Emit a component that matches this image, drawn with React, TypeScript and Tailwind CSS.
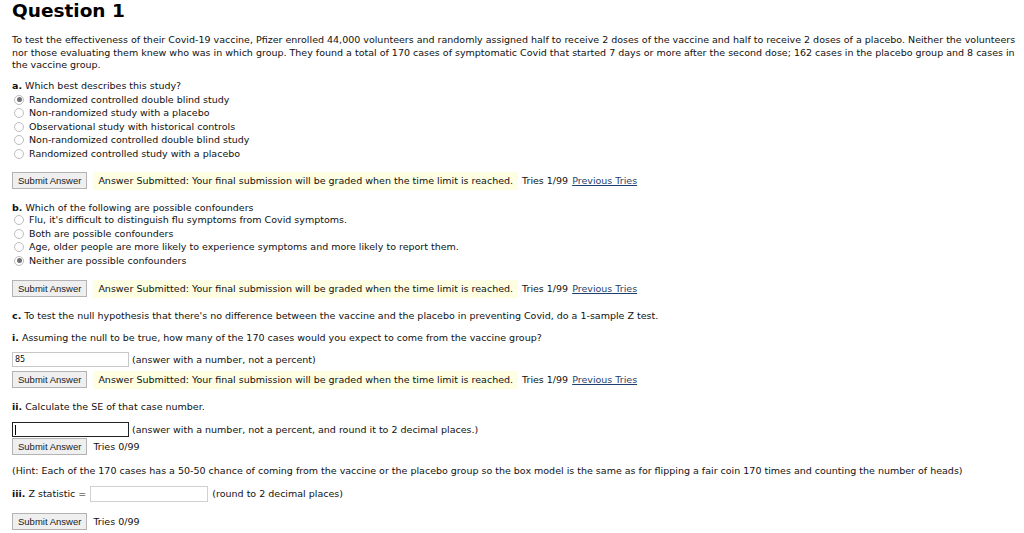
import React from "react";

const body = { fontFamily: '"DejaVu Sans", Verdana, sans-serif' };

function Radio({ checked }: { checked?: boolean }) {
  return (
    <span className="inline-flex items-center justify-center w-[10px] h-[10px] rounded-full border border-[#bdbdbd] bg-white mr-[5px] shrink-0">
      {checked && <span className="w-[5px] h-[5px] rounded-full bg-[#707070]" />}
    </span>
  );
}

function Options({ items, selected }: { items: string[]; selected: number }) {
  return (
    <div className="pl-[2px]">
      {items.map((t, i) => (
        <div key={t} className="flex items-center h-[13.5px]">
          <Radio checked={i === selected} />
          <span>{t}</span>
        </div>
      ))}
    </div>
  );
}

function SubmitButton() {
  return (
    <button
      className="h-[17px] px-[5px] border border-[#b3b3b3] bg-[#efefef] text-[9.5px] text-[#222] leading-none"
      style={{ fontFamily: '"Liberation Sans", Arial, sans-serif' }}
    >
      Submit Answer
    </button>
  );
}

function SubmittedRow({ className = "" }: { className?: string }) {
  return (
    <div className={`flex items-center h-[18px] ${className}`}>
      <SubmitButton />
      <span className="ml-[6px] bg-[#fefee3] px-[5px] leading-[18px]">
        Answer Submitted: Your final submission will be graded when the time limit is reached.
      </span>
      <span className="ml-[4px]">Tries 1/99</span>
      <span className="ml-[4px] underline text-[#1f3f6e]">Previous Tries</span>
    </div>
  );
}

function TriesRow({ className = "" }: { className?: string }) {
  return (
    <div className={`flex items-center h-[18px] ${className}`}>
      <SubmitButton />
      <span className="ml-[6px]">Tries 0/99</span>
    </div>
  );
}

export default function App() {
  return (
    <div className="bg-white text-[#111] w-[1024px] h-[533px] overflow-hidden px-[12px] text-[9.5px] leading-[12px]" style={body}>
      <h1 className="text-[18.5px] leading-[22px] font-bold text-black">Question 1</h1>

      <p className="mt-[12px] leading-[12.5px] whitespace-nowrap">
        To test the effectiveness of their Covid-19 vaccine, Pfizer enrolled 44,000 volunteers and randomly assigned half to receive 2 doses of the vaccine and half to receive 2 doses of a placebo. Neither the volunteers
        <br />
        nor those evaluating them knew who was in which group. They found a total of 170 cases of symptomatic Covid that started 7 days or more after the second dose; 162 cases in the placebo group and 8 cases in
        <br />
        the vaccine group.
      </p>

      <div className="mt-[8.5px]">
        <b>a.</b> Which best describes this study?
      </div>
      <div className="mt-[1px]">
        <Options
          selected={0}
          items={[
            "Randomized controlled double blind study",
            "Non-randomized study with a placebo",
            "Observational study with historical controls",
            "Non-randomized controlled double blind study",
            "Randomized controlled study with a placebo",
          ]}
        />
      </div>
      <SubmittedRow className="mt-[11px]" />

      <div className="mt-[12px]">
        <b>b.</b> Which of the following are possible confounders
      </div>
      <Options
        selected={3}
        items={[
          "Flu, it's difficult to distinguish flu symptoms from Covid symptoms.",
          "Both are possible confounders",
          "Age, older people are more likely to experience symptoms and more likely to report them.",
          "Neither are possible confounders",
        ]}
      />
      <SubmittedRow className="mt-[12px]" />

      <div className="mt-[12px]">
        <b>c.</b> To test the null hypothesis that there's no difference between the vaccine and the placebo in preventing Covid, do a 1-sample Z test.
      </div>
      <div className="mt-[10px]">
        <b>i.</b> Assuming the null to be true, how many of the 170 cases would you expect to come from the vaccine group?
      </div>
      <div className="mt-[8px] flex items-center h-[16px]">
        <div className="w-[117px] h-[15px] border border-[#c8c8c8] bg-white px-[2px] text-[8px] leading-[13px]">85</div>
        <span className="ml-[3px]">(answer with a number, not a percent)</span>
      </div>
      <SubmittedRow className="mt-[3px]" />

      <div className="mt-[12px]">
        <b>ii.</b> Calculate the SE of that case number.
      </div>
      <div className="mt-[9px] flex items-center h-[16px]">
        <div className="w-[117px] h-[15px] border border-[#222] bg-white flex items-center pl-[2px]">
          <span className="w-px h-[10px] bg-black" />
        </div>
        <span className="ml-[3px]">(answer with a number, not a percent, and round it to 2 decimal places.)</span>
      </div>
      <TriesRow className="mt-[0px]" />

      <div className="mt-[9px]">
        (Hint: Each of the 170 cases has a 50-50 chance of coming from the vaccine or the placebo group so the box model is the same as for flipping a fair coin 170 times and counting the number of heads)
      </div>
      <div className="mt-[8px] flex items-center h-[18px]">
        <span>
          <b>iii.</b> Z statistic =
        </span>
        <div className="ml-[4px] w-[118px] h-[16px] border border-[#d0d0d0] bg-white" />
        <span className="ml-[4px]">(round to 2 decimal places)</span>
      </div>
      <TriesRow className="mt-[10px]" />
    </div>
  );
}
